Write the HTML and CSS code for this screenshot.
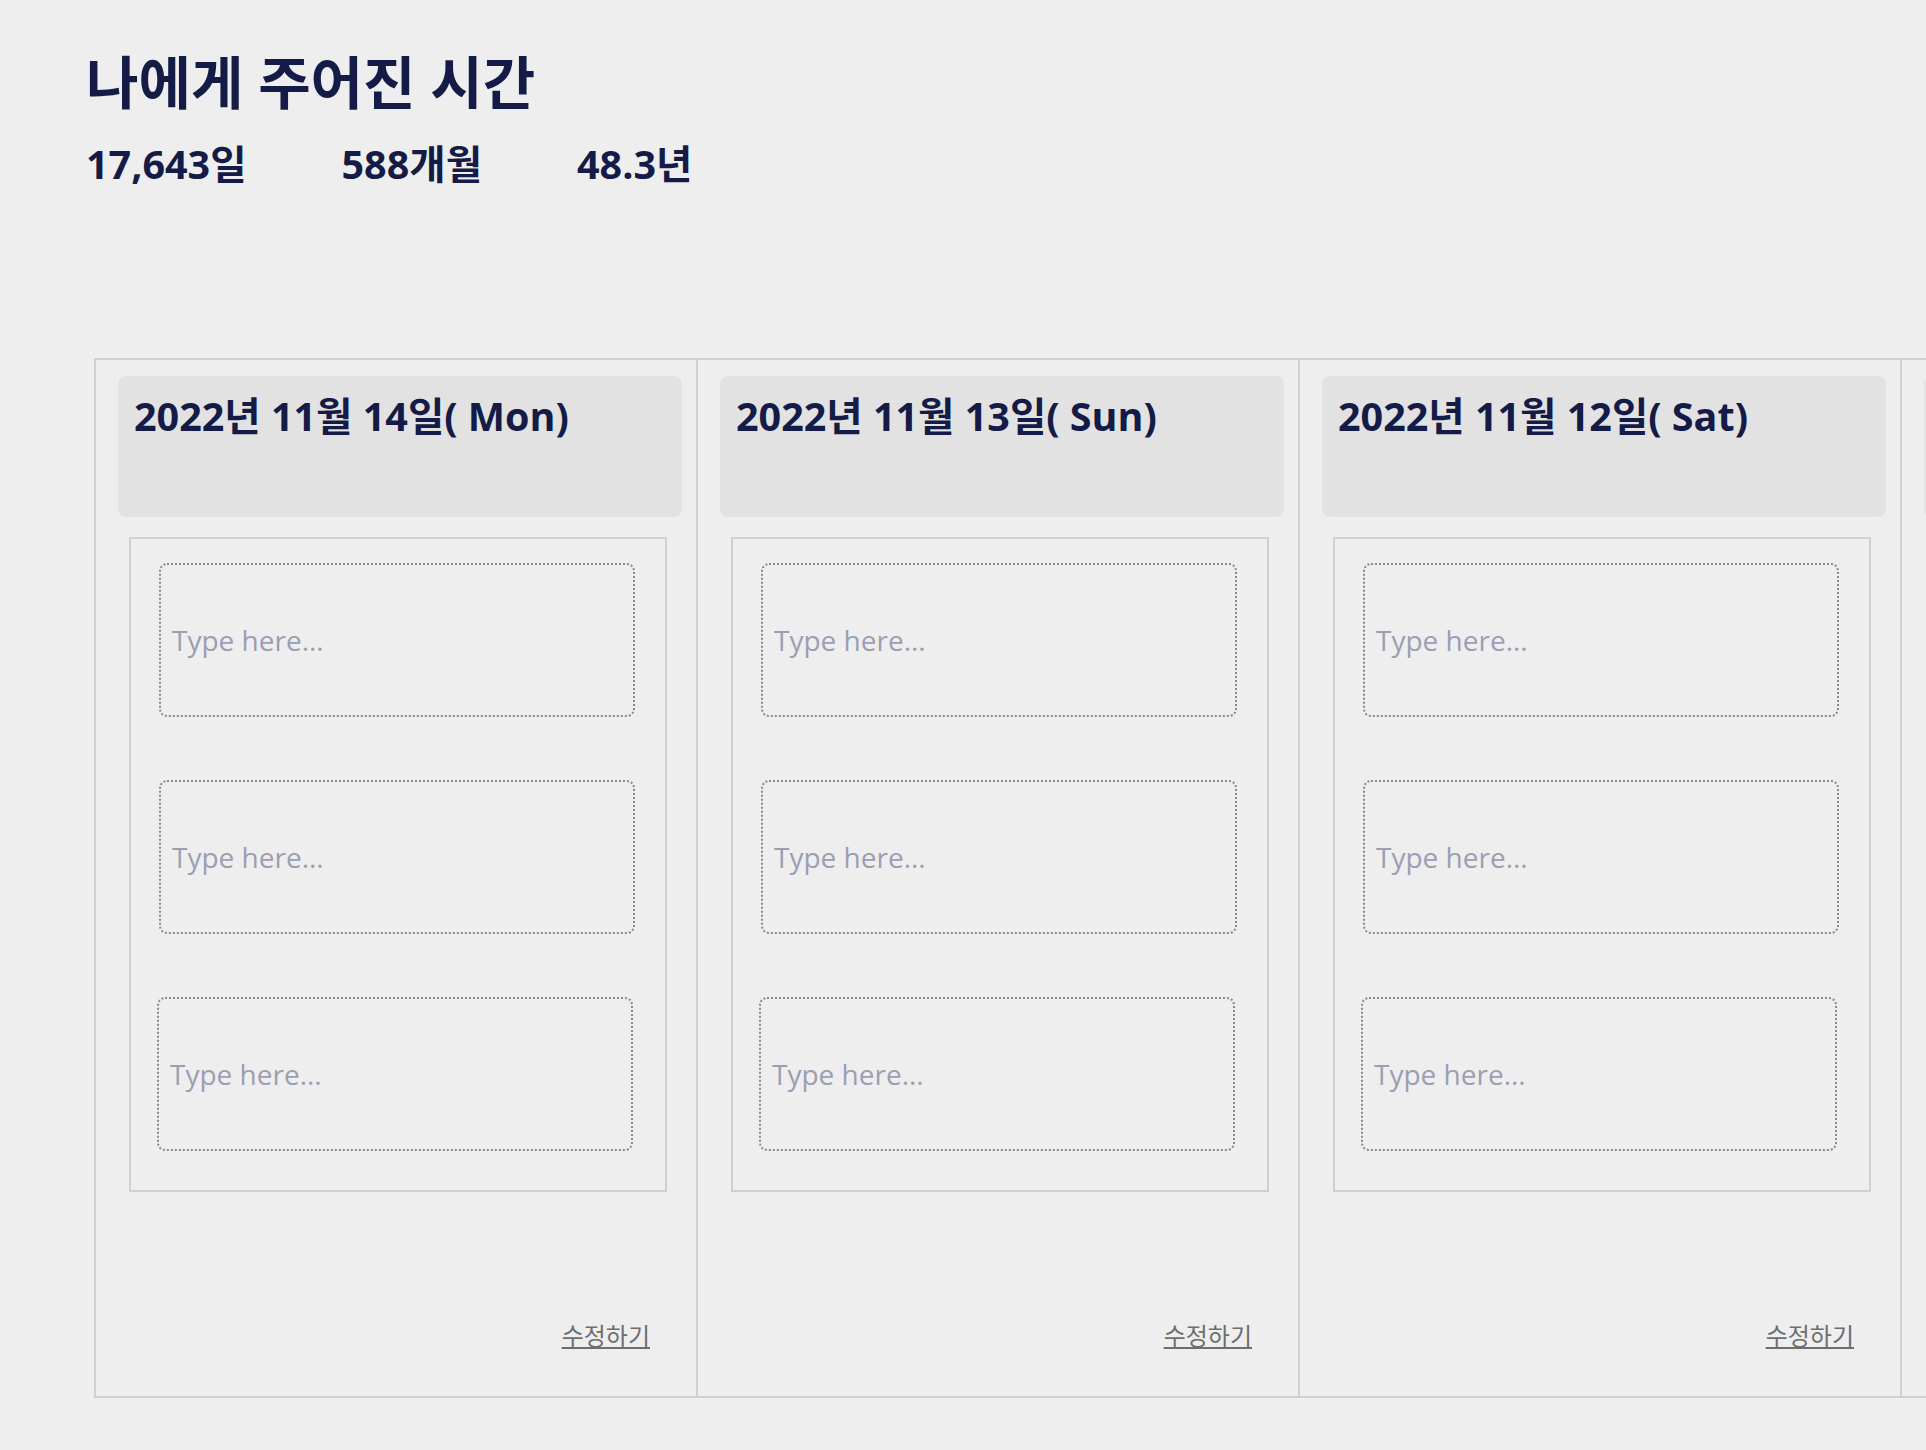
FILE: index.html
```html
<!DOCTYPE html>
<html lang="ko">
<head>
<meta charset="utf-8">
<title>나에게 주어진 시간</title>
<link rel="stylesheet" href="styles.css">
</head>
<body>
<main class="page">
  <h1 class="title">나에게 주어진 시간</h1>
  <div class="stats">
    <span class="stat">17,643일</span>
    <span class="stat">588개월</span>
    <span class="stat">48.3년</span>
  </div>
  <div class="board">
    <section class="day">
      <div class="day-head"><h2 class="day-title">2022년 11월 14일( Mon)</h2></div>
      <div class="entries">
        <input class="entry" type="text" placeholder="Type here...">
        <input class="entry" type="text" placeholder="Type here...">
        <input class="entry entry-last" type="text" placeholder="Type here...">
      </div>
      <div class="day-foot"><a class="edit" href="#">수정하기</a></div>
    </section>
    <section class="day">
      <div class="day-head"><h2 class="day-title">2022년 11월 13일( Sun)</h2></div>
      <div class="entries">
        <input class="entry" type="text" placeholder="Type here...">
        <input class="entry" type="text" placeholder="Type here...">
        <input class="entry entry-last" type="text" placeholder="Type here...">
      </div>
      <div class="day-foot"><a class="edit" href="#">수정하기</a></div>
    </section>
    <section class="day">
      <div class="day-head"><h2 class="day-title">2022년 11월 12일( Sat)</h2></div>
      <div class="entries">
        <input class="entry" type="text" placeholder="Type here...">
        <input class="entry" type="text" placeholder="Type here...">
        <input class="entry entry-last" type="text" placeholder="Type here...">
      </div>
      <div class="day-foot"><a class="edit" href="#">수정하기</a></div>
    </section>
    <section class="day">
      <div class="day-head"><h2 class="day-title">2022년 11월 11일( Fri)</h2></div>
      <div class="entries">
        <input class="entry" type="text" placeholder="Type here...">
        <input class="entry" type="text" placeholder="Type here...">
        <input class="entry entry-last" type="text" placeholder="Type here...">
      </div>
      <div class="day-foot"><a class="edit" href="#">수정하기</a></div>
    </section>
  </div>
</main>
</body>
</html>
```

FILE: styles.css
```css
* { box-sizing: border-box; }

html, body {
  margin: 0;
  background: #eeeeee;
  overflow: hidden;
}

body {
  font-family: "Open Sans", "Noto Sans CJK KR", sans-serif;
  color: #141b47;
}

.page {
  padding: 46px 0 0 86px;
}

.title {
  margin: 0;
  font-size: 57px;
  font-weight: 700;
  line-height: 72px;
}

.stats {
  display: flex;
  gap: 95px;
  margin-top: 20px;
  font-size: 39.5px;
  font-weight: 700;
  line-height: 52px;
}

.board {
  display: flex;
  margin: 168px 0 0 8px;
  height: 1040px;
  border-top: 2px solid #cfcfd7;
  border-bottom: 2px solid #cfcfd7;
  border-left: 2px solid #cfcfd7;
  overflow: hidden;
}

.day {
  flex: 0 0 602px;
  display: flex;
  flex-direction: column;
  border-right: 2px solid #cfcfd7;
}

.day-head {
  margin: 16px 14px 0 22px;
  height: 141px;
  background: #e2e2e2;
  border-radius: 8px;
  padding: 14px 16px 6px;
}

.day-title {
  margin: 0;
  font-size: 39.5px;
  font-weight: 700;
  line-height: 52px;
}

.entries {
  display: flex;
  flex-direction: column;
  gap: 63px;
  margin: 20px 29px 0 33px;
  border: 2px solid #cfcfd7;
  padding: 24px 30px 39px 28px;
}

.entry {
  display: block;
  height: 154px;
  border: 2px dotted #8a8a8a;
  border-radius: 8px;
  background: transparent;
  padding: 0 11px;
  font-family: "Open Sans", "Noto Sans CJK KR", sans-serif;
  font-size: 28px;
  color: #141b47;
  outline: none;
}

.entry::placeholder {
  color: #9c9eb2;
}

.entry-last {
  margin-left: -2px;
  margin-right: 2px;
}

.day-foot {
  flex: 1;
  display: flex;
  justify-content: flex-end;
  align-items: flex-end;
  padding: 0 46px 44px 0;
}

.edit {
  font-size: 24px;
  line-height: 32px;
  color: #6e6e6e;
  text-decoration: underline;
}
```
